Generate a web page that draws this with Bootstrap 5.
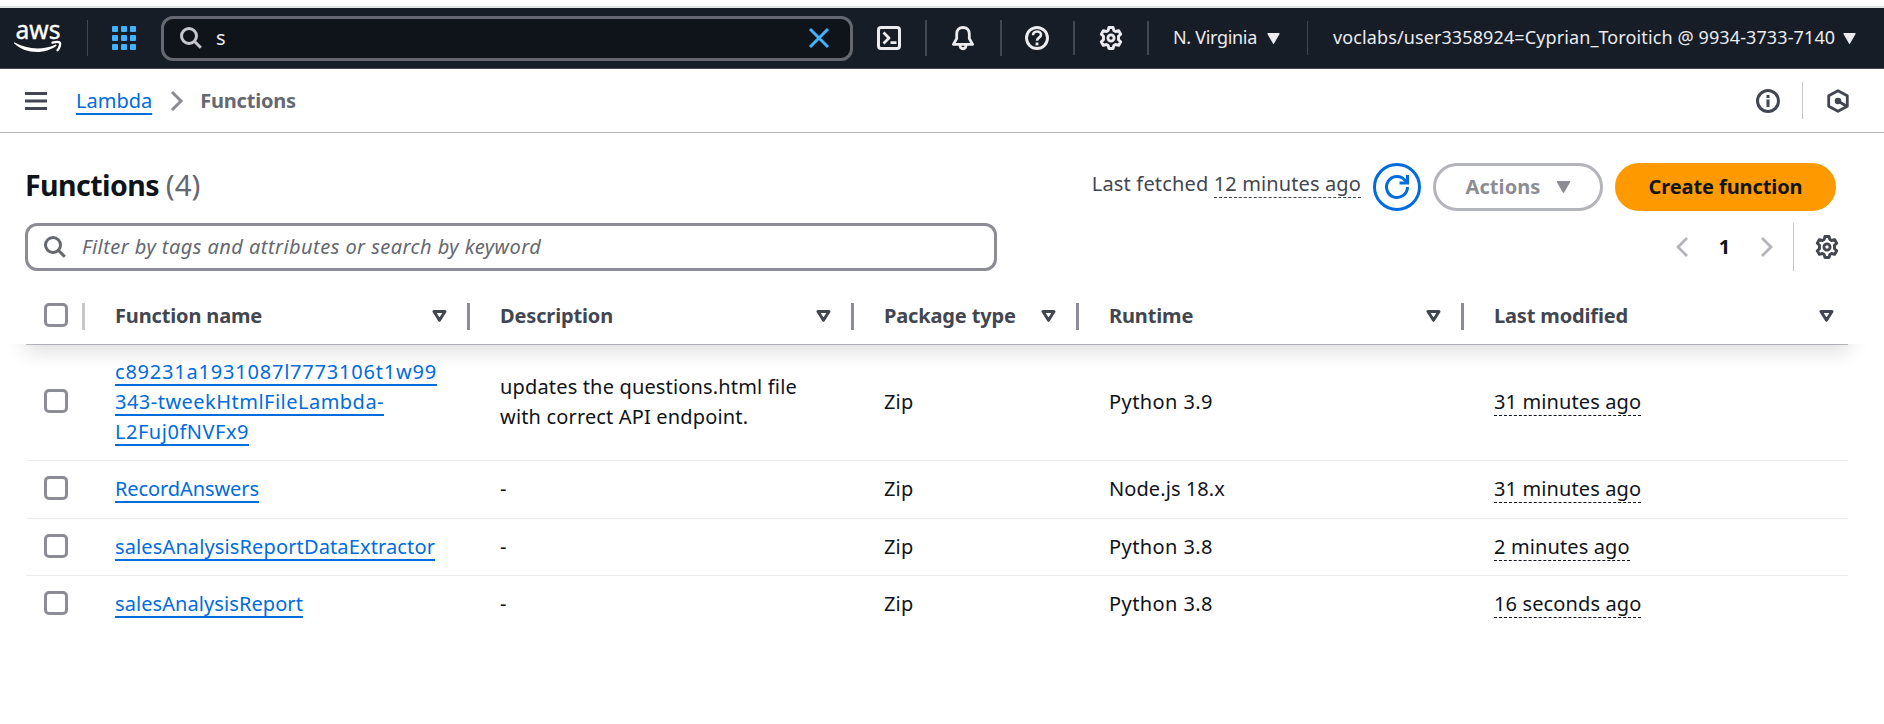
<!DOCTYPE html>
<html lang="en">
<head>
<meta charset="utf-8">
<title>Functions - Lambda</title>
<link href="https://cdn.jsdelivr.net/npm/bootstrap@5.3.0/dist/css/bootstrap.min.css" rel="stylesheet">
<script src="https://cdn.jsdelivr.net/npm/bootstrap@5.3.0/dist/js/bootstrap.bundle.min.js" defer></script>
<style>
  body { font-family: "Noto Sans", "Open Sans", sans-serif; font-size: 20px; line-height: 30px; color: #0f141a; background: #fff; letter-spacing: .16px; overflow: hidden; }
  svg { display: block; flex: none; overflow: visible; }
  .top-edge { height: 8px; border-bottom: 2px solid #e0e5e2; }
  .console-nav { height: 61px; padding: 0 0 0 14px; background: #161d26; border-bottom: 1px solid #424650; color: #ebebf0; font-size: 18px; }
  .console-nav > * { flex: none; }
  .vr-nav { width: 2px; height: 36px; background: #424650; }
  .vr-nav.short { height: 34px; }
  .vr-nav.thin { width: 1px; }
  .nav-search { width: 692px; height: 45px; margin-left: 25px; padding: 0 21px 0 16px; border: 3px solid #656871; border-radius: 12px; background: #0f141a; }
  .nav-search .query { margin-left: 14px; font-size: 20px; }
  .region { width: 84px; padding-bottom: 2px; letter-spacing: -.32px; white-space: nowrap; }
  .account { width: 502px; padding-bottom: 2px; letter-spacing: .11px; white-space: nowrap; }
  .crumb-bar { height: 64px; padding: 0 35px 0 25px; border-bottom: 1px solid #b4b4bb; color: #424650; }
  .link-aws { color: #006ce0; text-decoration: underline; text-decoration-thickness: 2px; text-underline-offset: 5px; text-decoration-skip-ink: none; }
  .link-aws:hover { color: #006ce0; }
  .here { color: #656871; letter-spacing: -.2px; }
  .vr-light { width: 1px; background: #c6c6cd; }
  main { padding: 30px 36px 0 25px; }
  .title { font-size: 28.5px; line-height: 36px; letter-spacing: -.55px; }
  .title span { font-size: 29.5px; letter-spacing: 0; color: #656871; }
  .fetched { margin: -6px 12px 0 0; color: #424650; }
  .ago { display: inline-block; line-height: 26px; border-bottom: 1px dashed currentColor; letter-spacing: .12px; }
  .btn-aws { height: 48px; border: 3px solid; border-radius: 24px; font-size: 20px; line-height: 30px; font-weight: 700; padding: 0; display: flex; align-items: center; justify-content: center; }
  .btn-refresh { width: 48px; border-color: #006ce0; color: #006ce0; }
  .btn-actions { width: 170px; border-color: #b4b4bb; color: #8c8c94; letter-spacing: .09px; gap: 15px; }
  .btn-create { width: 221px; border-color: #f90; background: #f90; color: #0f141a; letter-spacing: -.09px; }
  .filter { width: 972px; height: 48px; border: 3px solid #8c8c94; border-radius: 12px; padding: 0 16px; color: #656871; }
  .filter span { margin-left: 16px; letter-spacing: .45px; }
  .fn-wrap { position: relative; margin: 15px 0 0 1px; width: 1822px; }
  .head-shadow { position: absolute; inset: 0 0 auto 0; height: 58px; pointer-events: none; box-shadow: 0 6px 20px 1px rgba(0, 7, 22, .14); clip-path: inset(58px -20px -36px -20px); }
  .fn-table { table-layout: fixed; width: 1822px; margin: 0; --bs-table-bg: transparent; color: #0f141a; }
  .fn-table > :not(caption) > * > * { padding: 12px 20px 12px 30px; border-bottom: 1px solid #ebebf0; vertical-align: middle; color: inherit; }
  .fn-table > thead > tr > th { height: 58px; padding: 3px 0 0 30px; border-bottom-color: #c0c2c9; color: #424650; letter-spacing: -.15px; }
  .fn-table > :not(caption) > * > :first-child { padding-left: 18px; padding-right: 0; }
  .fn-table > tbody > tr:last-child > td { border-bottom-color: transparent; }
  .th-in { display: flex; align-items: center; justify-content: space-between; height: 27px; padding-right: 20px; border-right: 3px solid #8c8c94; }
  .th-in.first { padding: 0; border-color: #c6c6cd; }
  .th-in.last { padding-right: 14px; border: 0; }
  .tick { width: 24px; height: 24px; display: block; margin-bottom: 2px; border: 3px solid #8c8c94; border-radius: 5px; background: #fff; }
  .r1 { height: 116px; } .r2 { height: 58px; } .r3, .r4 { height: 57px; }
  .names { white-space: nowrap; }
</style>
</head>
<body>
<svg width="0" height="0" class="position-absolute" aria-hidden="true">
  <symbol id="gear" viewBox="0 0 24 24"><path d="M9.900 1.500h4.200l.7 3 1.800 1 3-.9 2.100 3.600-2.200 2.100v3.400l2.200 2.100-2.100 3.600-3-.9-1.800 1-.7 3H9.900l-.7-3-1.800-1-3 .9-2.100-3.600 2.200-2.100v-3.400L2.300 8.200l2.100-3.600 3 .9 1.800-1z" fill="none" stroke="currentColor" stroke-width="2.900" stroke-linejoin="round"/><circle cx="12" cy="12" r="3.100" fill="none" stroke="currentColor" stroke-width="2.800"/></symbol>
  <symbol id="lens" viewBox="0 0 22 22"><circle cx="9" cy="9" r="7.500" fill="none" stroke="currentColor" stroke-width="3"/><path d="M14.300 14.300l6.500 6.500" stroke="currentColor" stroke-width="3"/></symbol>
  <symbol id="sort" viewBox="0 0 15 12"><path d="M2 1.500h11L7.500 10.300z" fill="none" stroke="currentColor" stroke-width="3" stroke-linejoin="round"/></symbol>
  <symbol id="caret" viewBox="0 0 14 12"><path d="M1 .8h12L7 11.200z" fill="currentColor" stroke="currentColor" stroke-width="1.400" stroke-linejoin="round"/></symbol>
</svg>

<div class="top-edge"></div>
<nav class="console-nav d-flex align-items-center">
  <svg width="48" height="34" viewBox="0 0 48 34" fill="#fff"><text x="1.500" y="17.500" font-size="26" textLength="45" lengthAdjust="spacingAndGlyphs" font-family="Noto Sans" letter-spacing="0" stroke="#fff" stroke-width=".4">aws</text><path d="M.8 21.600c-.8-.6-1.300.2-.6.900C6.500 28.200 14.500 31 23 31c6.500 0 14-2.100 19.200-6 .9-.7.1-1.700-.9-1.300-5.800 2.500-12 3.700-17.700 3.700-8.300 0-16.200-2.200-22.800-5.800z"/><path d="M38.500 21.600c3-.8 6.300-1 7.300 0s-.1 5-2.300 7.700" fill="none" stroke="#fff" stroke-width="2.300" stroke-linecap="round" stroke-linejoin="round"/></svg>
  <div class="vr-nav thin" style="margin-left:25px"></div>
  <svg style="margin-left:24px" width="24" height="24" viewBox="0 0 24 24" fill="#42b4ff"><rect width="6" height="6" rx="1"/><rect x="9" width="6" height="6" rx="1"/><rect x="18" width="6" height="6" rx="1"/><rect y="9" width="6" height="6" rx="1"/><rect x="9" y="9" width="6" height="6" rx="1"/><rect x="18" y="9" width="6" height="6" rx="1"/><rect y="18" width="6" height="6" rx="1"/><rect x="9" y="18" width="6" height="6" rx="1"/><rect x="18" y="18" width="6" height="6" rx="1"/></svg>
  <div class="nav-search d-flex align-items-center">
    <svg width="22" height="22" style="color:#c6c6cd"><use href="#lens"/></svg>
    <span class="query">s</span>
    <svg class="ms-auto" width="20" height="20" viewBox="0 0 20 20"><path d="M1 1l18 18M19 1L1 19" stroke="#42b4ff" stroke-width="3"/></svg>
  </div>
  <svg style="margin-left:24px" width="24" height="24" viewBox="0 0 24 24" fill="none" stroke="currentColor" stroke-width="3" stroke-linejoin="round"><rect x="1.500" y="1.500" width="21" height="21" rx="2.500"/><path d="M6.500 6.500l5.500 5.500-5.500 5.500M13.500 16.700h6" stroke-width="2.800"/></svg>
  <div class="vr-nav" style="margin-left:24px"></div>
  <svg style="margin-left:24px" width="24" height="24" viewBox="0 0 24 24" fill="none" stroke="currentColor" stroke-width="2.800" stroke-linejoin="round"><path d="M12 1.500c-4 0-6.300 2.700-6.300 6.500v4.500L2.400 18.400h19.200l-3.300-5.900V8c0-3.800-2.300-6.500-6.300-6.500z"/><path d="M9 19c0 5 6 5 6 0"/></svg>
  <div class="vr-nav" style="margin-left:25px"></div>
  <svg style="margin-left:23px" width="24" height="24" viewBox="0 0 24 24" fill="none" stroke="currentColor" stroke-width="2.900"><circle cx="12" cy="12" r="10.500"/><path d="M8 9.300c0-5 8-5 8-.6 0 3-4 2.800-4 6" stroke-width="2.600"/><path d="M12 16.500v2.900"/></svg>
  <div class="vr-nav short" style="margin-left:24px"></div>
  <svg style="margin-left:24px" width="24" height="24"><use href="#gear"/></svg>
  <div class="vr-nav short" style="margin-left:24px"></div>
  <div class="region" style="margin-left:24px">N. Virginia</div>
  <svg style="margin-left:10px" width="13" height="11"><use href="#caret"/></svg>
  <div class="vr-nav short thin" style="margin-left:27px"></div>
  <div class="account" style="margin-left:25px">voclabs/user3358924=Cyprian_Toroitich @ 9934-3733-7140</div>
  <svg style="margin-left:8px" width="13" height="11"><use href="#caret"/></svg>
</nav>

<div class="crumb-bar d-flex align-items-center">
  <svg width="22" height="18" viewBox="0 0 22 18" stroke="currentColor" stroke-width="3"><path d="M0 1.500h22M0 9h22M0 16.500h22"/></svg>
  <a class="link-aws" style="margin-left:29px;letter-spacing:0" href="#">Lambda</a>
  <svg style="margin-left:19px" width="12" height="20" viewBox="0 0 12 20"><path d="M1 1l9 9-9 9" fill="none" stroke="#8c8c94" stroke-width="3"/></svg>
  <span class="here fw-bold" style="margin-left:17px">Functions</span>
  <svg class="ms-auto" width="24" height="24" viewBox="0 0 24 24" fill="none" stroke="currentColor" stroke-width="3"><circle cx="12" cy="12" r="10.500"/><path d="M12 10.500v7.500M12 6v3"/></svg>
  <div class="vr-light" style="height:37px;margin:0 24px 0 22px"></div>
  <svg width="22" height="24" viewBox="0 0 22 24" fill="none" stroke="currentColor" stroke-width="2.800"><path d="M11 1.700l9.300 5v10.600L11 22.300l-9.300-5V6.700z" stroke-linejoin="round"/><circle cx="11" cy="12" r="3.300" fill="currentColor" stroke="none"/><path d="M11 12l9 5.500"/></svg>
</div>

<main>
  <div class="d-flex align-items-center">
    <h1 class="title fw-bold m-0 pb-1">Functions <span class="fw-normal">(4)</span></h1>
    <div class="ms-auto d-flex align-items-center gap-0 me-2 pe-1">
      <div class="fetched">Last fetched <span class="ago">12 minutes ago</span></div>
      <button class="btn btn-aws btn-refresh"><svg width="24" height="24" viewBox="0 0 24 24" fill="none" stroke="currentColor" stroke-width="3"><path d="M22.500 12A10.500 10.500 0 1 1 20 5.200L22.500 8"/><path d="M22.500 0v8h-8"/></svg></button>
      <button class="btn btn-aws btn-actions" style="margin:0 12px">Actions <svg width="15" height="12"><use href="#caret"/></svg></button>
      <button class="btn btn-aws btn-create">Create function</button>
    </div>
  </div>
  <div class="d-flex align-items-center" style="margin-top:12px">
    <div class="filter d-flex align-items-center"><svg width="22" height="22"><use href="#lens"/></svg><span class="fst-italic">Filter by tags and attributes or search by keyword</span></div>
    <div class="ms-auto d-flex align-items-center" style="color:#b4b4bb;margin-right:9px">
      <svg width="12" height="20" viewBox="0 0 12 20"><path d="M11 1l-9 9 9 9" fill="none" stroke="currentColor" stroke-width="2.800"/></svg>
      <span class="fw-bold text-center" style="width:73px;color:#0f141a">1</span>
      <svg width="12" height="20" viewBox="0 0 12 20"><path d="M1 1l9 9-9 9" fill="none" stroke="currentColor" stroke-width="2.800"/></svg>
      <div class="vr-light" style="height:48px;margin:0 21px 0 20px"></div>
      <svg width="24" height="24" style="color:#424650"><use href="#gear"/></svg>
    </div>
  </div>

  <div class="fn-wrap">
    <div class="head-shadow"></div>
    <table class="table fn-table">
      <colgroup><col style="width:59px"><col style="width:385px"><col style="width:384px"><col style="width:225px"><col style="width:385px"><col style="width:384px"></colgroup>
      <thead><tr>
        <th><div class="th-in first"><span class="tick"></span></div></th>
        <th><div class="th-in">Function name<svg width="15" height="12"><use href="#sort"/></svg></div></th>
        <th><div class="th-in">Description<svg width="15" height="12"><use href="#sort"/></svg></div></th>
        <th><div class="th-in">Package type<svg width="15" height="12"><use href="#sort"/></svg></div></th>
        <th><div class="th-in">Runtime<svg width="15" height="12"><use href="#sort"/></svg></div></th>
        <th><div class="th-in last">Last modified<svg width="15" height="12"><use href="#sort"/></svg></div></th>
      </tr></thead>
      <tbody>
        <tr class="r1"><td><span class="tick"></span></td><td class="names"><a class="link-aws" href="#"><span style="letter-spacing:.79px">c89231a1931087l7773106t1w99</span><br><span style="letter-spacing:.48px">343-tweekHtmlFileLambda-</span><br><span style="letter-spacing:.52px">L2Fuj0fNVFx9</span></a></td><td>updates the questions.html file<br>with correct API endpoint.</td><td>Zip</td><td style="letter-spacing:.42px">Python 3.9</td><td><span class="ago">31 minutes ago</span></td></tr>
        <tr class="r2"><td><span class="tick"></span></td><td class="names"><a class="link-aws" style="letter-spacing:-.09px" href="#">RecordAnswers</a></td><td>-</td><td>Zip</td><td style="letter-spacing:.08px">Node.js 18.x</td><td><span class="ago">31 minutes ago</span></td></tr>
        <tr class="r3"><td><span class="tick"></span></td><td class="names"><a class="link-aws" style="letter-spacing:.13px" href="#">salesAnalysisReportDataExtractor</a></td><td>-</td><td>Zip</td><td style="letter-spacing:.42px">Python 3.8</td><td><span class="ago">2 minutes ago</span></td></tr>
        <tr class="r4"><td><span class="tick"></span></td><td class="names"><a class="link-aws" style="letter-spacing:.08px" href="#">salesAnalysisReport</a></td><td>-</td><td>Zip</td><td style="letter-spacing:.42px">Python 3.8</td><td><span class="ago">16 seconds ago</span></td></tr>
      </tbody>
    </table>
  </div>
</main>
</body>
</html>
